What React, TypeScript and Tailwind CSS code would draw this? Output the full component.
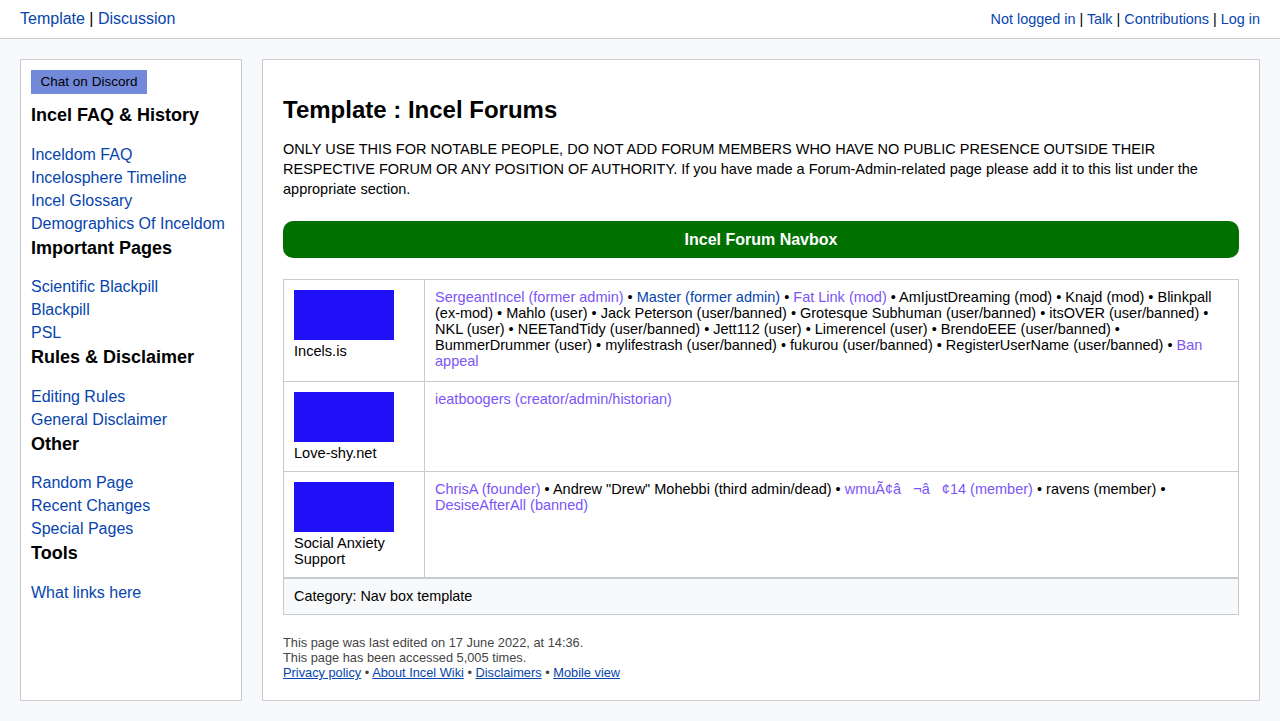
import React from 'react'

const link = 'text-[#0645ad]'
const purple = 'text-[#7b55f7]'

const sidebar = [
  { title: 'Incel FAQ & History', items: ['Inceldom FAQ', 'Incelosphere Timeline', 'Incel Glossary', 'Demographics Of Inceldom'] },
  { title: 'Important Pages', items: ['Scientific Blackpill', 'Blackpill', 'PSL'] },
  { title: 'Rules & Disclaimer', items: ['Editing Rules', 'General Disclaimer'] },
  { title: 'Other', items: ['Random Page', 'Recent Changes', 'Special Pages'] },
  { title: 'Tools', items: ['What links here'] },
]

type Part = { t: string; k?: 'p' | 'b' }

const Sep = () => <span> • </span>

function Parts({ parts }: { parts: Part[] }) {
  return (
    <>
      {parts.map((p, i) => (
        <React.Fragment key={i}>
          {i > 0 && <Sep />}
          <span className={p.k === 'p' ? purple : p.k === 'b' ? link : ''}>{p.t}</span>
        </React.Fragment>
      ))}
    </>
  )
}

const rows: { name: string; h: string; parts: Part[] }[] = [
  {
    name: 'Incels.is',
    h: 'h-[101px]',
    parts: [
      { t: 'SergeantIncel (former admin)', k: 'p' },
      { t: 'Master (former admin)', k: 'b' },
      { t: 'Fat Link (mod)', k: 'p' },
      { t: 'AmIjustDreaming (mod)' },
      { t: 'Knajd (mod)' },
      { t: 'Blinkpall (ex-mod)' },
      { t: 'Mahlo (user)' },
      { t: 'Jack Peterson (user/banned)' },
      { t: 'Grotesque Subhuman (user/banned)' },
      { t: 'itsOVER (user/banned)' },
      { t: 'NKL (user)' },
      { t: 'NEETandTidy (user/banned)' },
      { t: 'Jett112 (user)' },
      { t: 'Limerencel (user)' },
      { t: 'BrendoEEE (user/banned)' },
      { t: 'BummerDrummer (user)' },
      { t: 'mylifestrash (user/banned)' },
      { t: 'fukurou (user/banned)' },
      { t: 'RegisterUserName (user/banned)' },
      { t: 'Ban appeal', k: 'p' },
    ],
  },
  {
    name: 'Love-shy.net',
    h: 'h-[90px]',
    parts: [{ t: 'ieatboogers (creator/admin/historian)', k: 'p' }],
  },
  {
    name: 'Social Anxiety Support',
    h: 'h-[106px]',
    parts: [
      { t: 'ChrisA (founder)', k: 'p' },
      { t: 'Andrew "Drew" Mohebbi (third admin/dead)' },
      { t: 'wmuÃ¢â\u00a0\u00a0\u00a0¬â\u00a0\u00a0\u00a0¢14 (member)', k: 'p' },
      { t: 'ravens (member)' },
      { t: 'DesiseAfterAll (banned)', k: 'p' },
    ],
  },
]

export default function App() {
  return (
    <div className="min-h-[721px] bg-[#f8f9fa] text-black" style={{ fontFamily: '"Liberation Sans", Arial, sans-serif' }}>
      <header className="h-[39px] bg-white border-b border-[#c8ccd1] flex items-center justify-between px-5">
        <div className="text-base">
          <span className={link}>Template</span> | <span className={link}>Discussion</span>
        </div>
        <div className="text-[14.4px] pt-px">
          <span className={link}>Not logged in</span> | <span className={link}>Talk</span> |{' '}
          <span className={link}>Contributions</span> | <span className={link}>Log in</span>
        </div>
      </header>

      <div className="flex gap-5 px-5 pt-5 pb-5">
        <aside className="w-[222px] shrink-0 h-[642px] bg-white border border-[#c8ccd1] px-[10px] pt-[10px]">
          <div className="w-[116px] text-center bg-[#7289da] text-[13.5px] h-6 leading-6">Chat on Discord</div>
          {sidebar.map((s, i) => (
            <div key={s.title}>
              <h3 className={`font-bold text-lg leading-[22px] ${i === 0 ? 'mt-[10px]' : 'mt-[2px]'}`}>{s.title}</h3>
              <ul className="mt-[16.5px]">
                {s.items.map((it) => (
                  <li key={it} className={`${link} text-base leading-[23px]`}>{it}</li>
                ))}
              </ul>
            </div>
          ))}
        </aside>

        <main className="flex-1 h-[642px] bg-white border border-[#c8ccd1] px-5 pt-[36px]">
          <h1 className="text-2xl font-bold leading-[28px]">Template : Incel Forums</h1>
          <p className="text-[14.5px] leading-5 mt-[15px]">
            ONLY USE THIS FOR NOTABLE PEOPLE, DO NOT ADD FORUM MEMBERS WHO HAVE NO PUBLIC PRESENCE OUTSIDE THEIR RESPECTIVE FORUM OR ANY POSITION OF AUTHORITY. If you have made a Forum-Admin-related page please add it to this list under the appropriate section.
          </p>
          <div className="mt-[22px] h-[37px] rounded-[10px] bg-[#007000] text-white font-bold text-base flex items-center justify-center">
            Incel Forum Navbox
          </div>

          <div className="mt-[21px] border border-[#c8ccd1]">
            {rows.map((r, i) => (
              <div key={r.name} className={`flex ${r.h} ${i > 0 ? 'border-t border-[#c8ccd1]' : ''}`}>
                <div className="w-[141px] shrink-0 border-r border-[#c8ccd1] px-[10px] pt-[10px] text-[14.6px] leading-4">
                  <div className="w-[100px] h-[50px] bg-[#1f10f8] mb-[3px]" />
                  {r.name}
                </div>
                <div className="flex-1 px-[10px] pt-[9px] text-[14.5px] leading-4">
                  <Parts parts={r.parts} />
                </div>
              </div>
            ))}
            <div className="border-t-2 border-[#c8ccd1] bg-[#f8f9fa] h-[37px] flex items-center px-[10px] text-[14.4px]">
              Category: Nav box template
            </div>
          </div>

          <div className="mt-[20px] text-[12.8px] leading-[15px] text-[#444]">
            <div>This page was last edited on 17 June 2022, at 14:36.</div>
            <div>This page has been accessed 5,005 times.</div>
            <div>
              <span className={`${link} underline`}>Privacy policy</span> •{' '}
              <span className={`${link} underline`}>About Incel Wiki</span> •{' '}
              <span className={`${link} underline`}>Disclaimers</span> •{' '}
              <span className={`${link} underline`}>Mobile view</span>
            </div>
          </div>
        </main>
      </div>
    </div>
  )
}
